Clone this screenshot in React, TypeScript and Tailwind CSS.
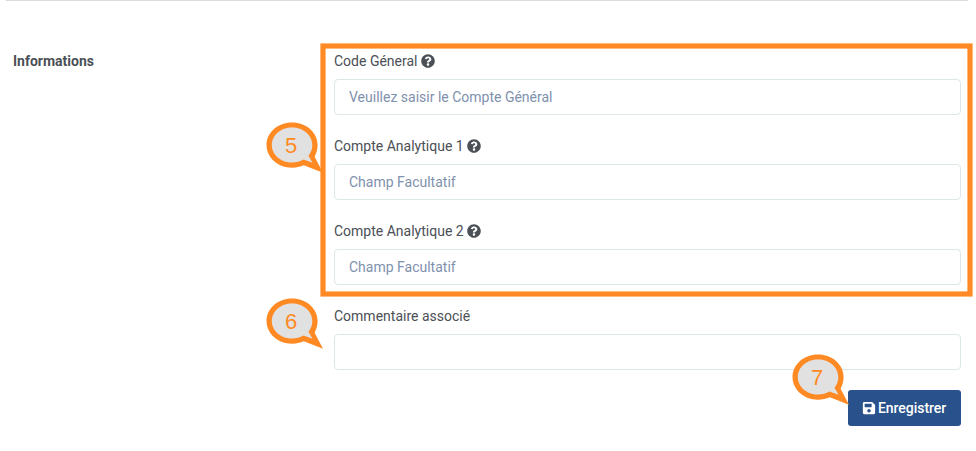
import { FaQuestionCircle, FaSave } from "react-icons/fa";

type FieldProps = { id: string; label: string; placeholder?: string; help?: boolean };

function Field({ id, label, placeholder, help }: FieldProps) {
  return (
    <div className="flex flex-col">
      <label htmlFor={id} className="flex h-[21px] items-center gap-[3px] leading-[21px] text-[#4b4f56]">
        <span>{label}</span>
        {help && <FaQuestionCircle className="mb-[2px] size-[14px]" />}
      </label>
      <input
        id={id}
        placeholder={placeholder}
        className="mt-[7px] h-9 w-full rounded border border-[#dde6e9] bg-white px-[14px] outline-none placeholder:text-[#8091ad]"
      />
    </div>
  );
}

function Callout({ n, className }: { n: number; className: string }) {
  return (
    <svg className={`absolute ${className}`} width="60" height="54" viewBox="0 0 60 54">
      <path
        d="M27 .4C12.900 .4 1.500 10.400 1.500 23s11.400 22.700 25.500 22.700c4.300 0 8.300-.9 11.800-2.500L58 50.700 49.600 34.700C51.500 31.200 52.600 27.200 52.600 23 52.600 10.400 41.200 .4 27 .4Z"
        fill="#ff8a24"
      />
      <path
        d="M27 5.500C15.900 5.500 6.800 13.200 6.800 23s9.100 17.500 20.200 17.500c4.300 0 8.200-1.100 11.500-3l9 3.300-4-7.100c2.500-3 3.800-6.600 3.800-10.700C47.300 13.200 38.200 5.500 27 5.500Z"
        fill="#e1e1e1"
      />
      <text x="26" y="31" textAnchor="middle" fill="#ff8a24" fontSize="22" className="font-['Liberation_Sans',sans-serif]">
        {n}
      </text>
    </svg>
  );
}

export default function App() {
  return (
    <main className="relative h-[451px] w-[976px] overflow-hidden bg-white font-[Roboto,sans-serif] text-[14px] text-[#4b4f56]">
      <hr className="ml-[6px] w-[962px] border-t border-[#d7dce1]" />
      <div className="flex pl-[13px] pt-[50px]">
        <h2 className="w-[321px] font-bold leading-[21px]">Informations</h2>
        <form className="flex w-[627px] flex-col gap-[21px]">
          <Field id="general" label="Code Géneral" placeholder="Veuillez saisir le Compte Général" help />
          <Field id="analytique1" label="Compte Analytique 1" placeholder="Champ Facultatif" help />
          <Field id="analytique2" label="Compte Analytique 2" placeholder="Champ Facultatif" help />
          <Field id="commentaire" label="Commentaire associé" />
          <button
            type="button"
            className="-mt-px flex h-9 w-[113px] items-center gap-[2px] self-end rounded-[3px] bg-[#29528c] pl-[14px] font-medium text-white"
          >
            <FaSave className="size-[14px]" />
            <span className="tracking-[-0.05px]">Enregistrer</span>
          </button>
        </form>
      </div>
      <svg className="pointer-events-none absolute left-0 top-0" width="976" height="451">
        <rect x="323" y="46" width="647" height="248" fill="none" stroke="#ff8a24" strokeWidth="5.200" />
      </svg>
      <Callout n={5} className="left-[265px] top-[122px]" />
      <Callout n={6} className="left-[265px] top-[298px]" />
      <Callout n={7} className="left-[791px] top-[354px]" />
    </main>
  );
}
